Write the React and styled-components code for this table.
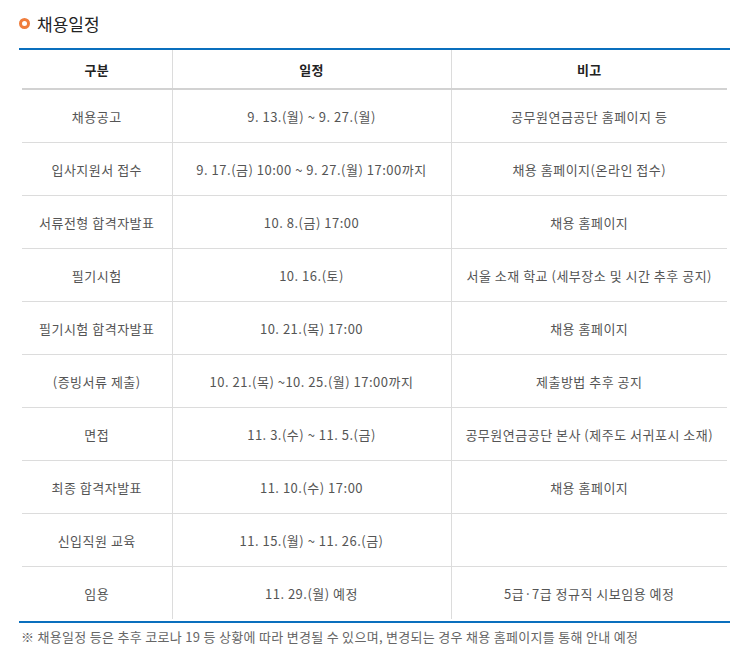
import React from 'react'
import styled, { createGlobalStyle } from 'styled-components'

const rows = [
  ['채용공고', '9. 13.(월) ~ 9. 27.(월)', '공무원연금공단 홈페이지 등'],
  ['입사지원서 접수', '9. 17.(금) 10:00 ~ 9. 27.(월) 17:00까지', '채용 홈페이지(온라인 접수)'],
  ['서류전형 합격자발표', '10. 8.(금) 17:00', '채용 홈페이지'],
  ['필기시험', '10. 16.(토)', '서울 소재 학교 (세부장소 및 시간 추후 공지)'],
  ['필기시험 합격자발표', '10. 21.(목) 17:00', '채용 홈페이지'],
  ['(증빙서류 제출)', '10. 21.(목) ~10. 25.(월) 17:00까지', '제출방법 추후 공지'],
  ['면접', '11. 3.(수) ~ 11. 5.(금)', '공무원연금공단 본사 (제주도 서귀포시 소재)'],
  ['최종 합격자발표', '11. 10.(수) 17:00', '채용 홈페이지'],
  ['신입직원 교육', '11. 15.(월) ~ 11. 26.(금)', ''],
  ['임용', '11. 29.(월) 예정', '5급·7급 정규직 시보임용 예정'],
]

const GlobalStyle = createGlobalStyle`
  body {
    margin: 0;
    background: #fff;
    font-family: "Noto Sans CJK KR", "Noto Sans", sans-serif;
  }
`

const Page = styled.div`
  width: 750px;
  padding: 10px 20px 0 19px;
  box-sizing: border-box;
`

const Title = styled.h3`
  display: flex;
  align-items: center;
  gap: 7px;
  margin: 0;
  height: 27px;
  font-size: 17px;
  font-weight: 400;
  color: #222;
  letter-spacing: 0;
`

const Ring = styled.span`
  width: 11px;
  height: 11px;
  border: 3px solid #f07d3c;
  border-radius: 50%;
  box-sizing: border-box;
`

const TableWrap = styled.div`
  margin-top: 11px;
  border-top: 2px solid #0a6fbd;
  border-bottom: 2px solid #0a6fbd;
  padding: 0 3px 2px;
`

const Table = styled.table`
  width: 100%;
  border-collapse: collapse;
  table-layout: fixed;
`

const HeadCell = styled.th`
  height: 38px;
  padding: 0;
  font-size: 13px;
  font-weight: 700;
  color: #222;
  letter-spacing: 0.4px;
  border-bottom: 2px solid #d2d2d2;
  border-left: ${(p) => (p.$first ? 'none' : '1px solid #dcdcdc')};
`

const Cell = styled.td`
  height: 52px;
  padding: 0;
  text-align: center;
  font-size: 13px;
  color: #555;
  letter-spacing: 0.5px;
  border-bottom: ${(p) => (p.$last ? 'none' : '1px solid #dcdcdc')};
  border-left: ${(p) => (p.$first ? 'none' : '1px solid #dcdcdc')};
`

const Note = styled.p`
  margin: 4px 0 0 2px;
  font-size: 13px;
  color: #666;
  letter-spacing: 0.3px;
`

export default function App() {
  return (
    <Page>
      <GlobalStyle />
      <Title>
        <Ring />
        채용일정
      </Title>
      <TableWrap>
        <Table>
          <colgroup>
            <col style={{ width: 150 }} />
            <col style={{ width: 279 }} />
            <col />
          </colgroup>
          <thead>
            <tr>
              <HeadCell $first>구분</HeadCell>
              <HeadCell>일정</HeadCell>
              <HeadCell>비고</HeadCell>
            </tr>
          </thead>
          <tbody>
            {rows.map((r, i) => (
              <tr key={i}>
                {r.map((c, j) => (
                  <Cell key={j} $first={j === 0} $last={i === rows.length - 1}>
                    {c}
                  </Cell>
                ))}
              </tr>
            ))}
          </tbody>
        </Table>
      </TableWrap>
      <Note>※ 채용일정 등은 추후 코로나 19 등 상황에 따라 변경될 수 있으며, 변경되는 경우 채용 홈페이지를 통해 안내 예정</Note>
    </Page>
  )
}
